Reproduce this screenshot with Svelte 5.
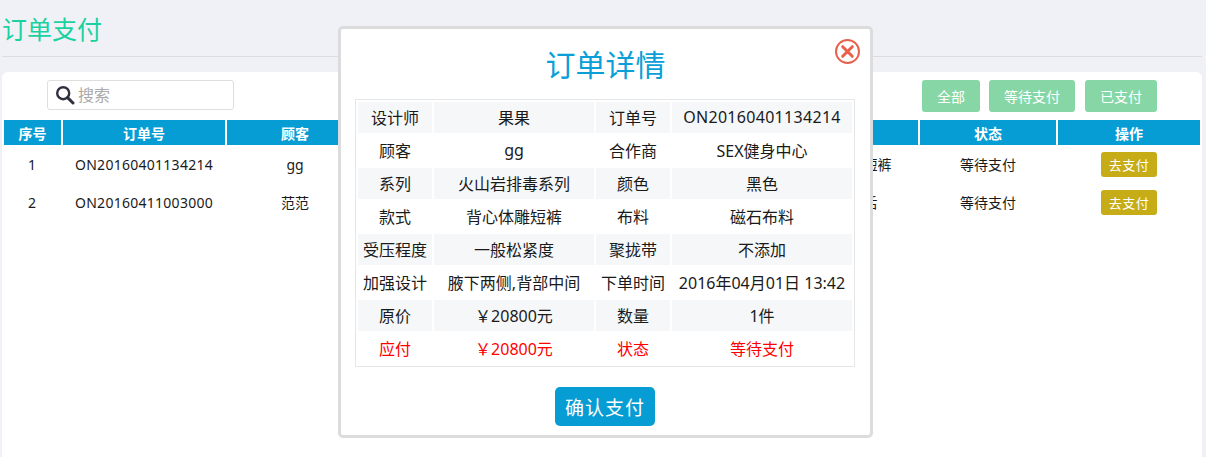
<script>
  const orders = [
    { no: 1, id: 'ON20160401134214', customer: 'gg', partner: 'SEX健身中心', series: '火山岩排毒系列', style: '背心体雕短裤' },
    { no: 2, id: 'ON20160411003000', customer: '范范', partner: 'SEX健身中心', series: '火山岩排毒系列', style: '束腰产后' }
  ];
  const details = [
    ['设计师', '果果', '订单号', 'ON20160401134214'],
    ['顾客', 'gg', '合作商', 'SEX健身中心'],
    ['系列', '火山岩排毒系列', '颜色', '黑色'],
    ['款式', '背心体雕短裤', '布料', '磁石布料'],
    ['受压程度', '一般松紧度', '聚拢带', '不添加'],
    ['加强设计', '腋下两侧,背部中间', '下单时间', '2016年04月01日 13:42'],
    ['原价', '￥20800元', '数量', '1件'],
    ['应付', '￥20800元', '状态', '等待支付']
  ];
</script>

<div class="page">
  <h1 class="title">订单支付</h1>
  <div class="rule"></div>
  <section class="card">
    <div class="toolbar">
      <label class="search">
        <svg width="20" height="20" viewBox="0 0 20 20" aria-hidden="true">
          <circle cx="8.2" cy="8.2" r="6" fill="none" stroke="#2f2f3f" stroke-width="2.4" />
          <path d="M12.6 12.6 18 18" stroke="#2f2f3f" stroke-width="3" stroke-linecap="round" />
        </svg>
        <span>搜索</span>
      </label>
      <div class="filters">
        <button>全部</button>
        <button>等待支付</button>
        <button class="last">已支付</button>
      </div>
    </div>
    <table class="orders">
      <colgroup>
        <col style="width:60px" /><col style="width:164px" /><col style="width:138px" /><col style="width:138px" />
        <col style="width:138px" /><col style="width:140px" /><col style="width:139px" /><col style="width:138px" /><col />
      </colgroup>
      <thead>
        <tr><th>序号</th><th>订单号</th><th>顾客</th><th>合作商</th><th>系列</th><th>颜色</th><th>款式</th><th>状态</th><th>操作</th></tr>
      </thead>
      <tbody>
        {#each orders as o}
          <tr>
            <td>{o.no}</td><td class="code">{o.id}</td><td>{o.customer}</td><td>{o.partner}</td><td>{o.series}</td><td>黑色</td><td>{o.style}</td><td>等待支付</td>
            <td><button class="pay">去支付</button></td>
          </tr>
        {/each}
      </tbody>
    </table>
  </section>

  <div class="modal">
    <h2>订单详情</h2>
    <svg class="close" width="26" height="26" viewBox="0 0 26 26" aria-label="关闭">
      <circle cx="12.5" cy="12.5" r="11.5" fill="none" stroke="#e8604c" stroke-width="2" />
      <path d="M7.7 7.7 17.3 17.3M17.3 7.7 7.7 17.3" stroke="#e8604c" stroke-width="3" stroke-linecap="round" />
    </svg>
    <table class="detail">
      <colgroup><col style="width:74px" /><col style="width:160px" /><col style="width:74px" /><col /></colgroup>
      <tbody>
        {#each details as row, i}
          <tr class:shade={i % 2 === 0} class:due={i === 7}>
            {#each row as cell}<td class:code={cell.startsWith('ON2')}>{cell}</td>{/each}
          </tr>
        {/each}
      </tbody>
    </table>
    <button class="confirm">确认支付</button>
  </div>
</div>

<style>
  :global(body) {
    margin: 0;
    background: #f0f1f6;
    overflow: hidden;
  }
  .page {
    position: relative;
    height: 457px;
    padding: 0 4px 0 2px;
    box-sizing: border-box;
    overflow: hidden;
    font-family: "Noto Sans", "Noto Sans CJK SC", sans-serif;
    font-size: 14px;
    color: #1a1a1a;
  }
  .title {
    margin: 0;
    padding-top: 12px;
    height: 43px;
    box-sizing: border-box;
    font-size: 25px;
    font-weight: 400;
    line-height: 34px;
    color: #1ad19f;
  }
  .rule {
    height: 1px;
    background: #dcdcdf;
    margin-bottom: 15px;
    margin-top: 13px;
  }
  .card {
    background: #fff;
    border-radius: 6px 6px 0 0;
    height: 385px;
  }
  .toolbar {
    display: flex;
    justify-content: space-between;
    padding: 8px 45px 0 45px;
    height: 48px;
    box-sizing: border-box;
  }
  .search {
    display: flex;
    align-items: center;
    gap: 3px;
    width: 187px;
    height: 30px;
    box-sizing: border-box;
    padding: 0 0 1px 7px;
    border: 1px solid #dedede;
    border-radius: 3px;
    color: #aaa;
    font-size: 16px;
  }
  .search span {
    margin-top: -1px;
  }
  .filters {
    display: flex;
    gap: 9px;
  }
  .filters button {
    height: 32px;
    padding: 0 15px;
    border: 0;
    border-radius: 3px;
    background: #86d6a6;
    color: #fff;
    font: inherit;
  }
  .filters .last {
    margin-left: 1px;
  }
  .orders {
    width: 1200px;
    table-layout: fixed;
    border-collapse: separate;
    border-spacing: 0;
  }
  .orders th {
    height: 25px;
    padding: 0;
    background: #069dd4;
    background-clip: padding-box;
    border: 0 solid transparent;
    border-width: 0 1px;
    color: #fff;
    font-size: 14px;
    font-weight: 700;
  }
  .orders th:first-child { border-left-width: 2px; }
  .orders th:last-child { border-right-width: 2px; }
  .orders td {
    height: 38px;
    padding: 0;
    text-align: center;
    color: #1a1a1a;
  }
  .orders .code {
    letter-spacing: 0.27px;
  }
  .pay {
    display: inline-block;
    width: 56px;
    height: 25px;
    margin-right: 1px;
    padding: 0;
    border: 0;
    border-radius: 3px;
    background: #c6ac16;
    color: #fff;
    font: inherit;
    font-size: 13px;
    letter-spacing: 0.5px;
    vertical-align: middle;
  }
  .modal {
    position: absolute;
    left: 338px;
    top: 26px;
    width: 535px;
    height: 412px;
    box-sizing: border-box;
    padding: 0 14px;
    background: #fff;
    border: 3px solid #dcdcdc;
    border-radius: 5px;
    text-align: center;
  }
  .modal h2 {
    margin: 0;
    height: 70px;
    padding-top: 14px;
    box-sizing: border-box;
    font-size: 30px;
    font-weight: 400;
    line-height: 44px;
    color: #0b9fd8;
  }
  .close {
    position: absolute;
    right: 9px;
    top: 10px;
  }
  .detail {
    width: 500px;
    table-layout: fixed;
    border-collapse: separate;
    border-spacing: 2px;
    border: 1px solid #e4e6e8;
    box-sizing: border-box;
    font-size: 16px;
    color: #1a1a1a;
  }
  .detail td {
    height: 31px;
    box-sizing: border-box;
    padding: 0 0 2px;
    text-align: center;
    white-space: nowrap;
  }
  .detail .code {
    letter-spacing: 0.3px;
  }
  .shade td {
    background: #f5f7f9;
  }
  .due td {
    color: #f00;
  }
  .confirm {
    display: block;
    margin: 20px 0 0 200px;
    width: 100px;
    height: 39px;
    padding: 0;
    border: 0;
    border-radius: 5px;
    background: #069dd4;
    color: #fff;
    font: inherit;
    font-size: 19px;
    letter-spacing: 1px;
  }
</style>
